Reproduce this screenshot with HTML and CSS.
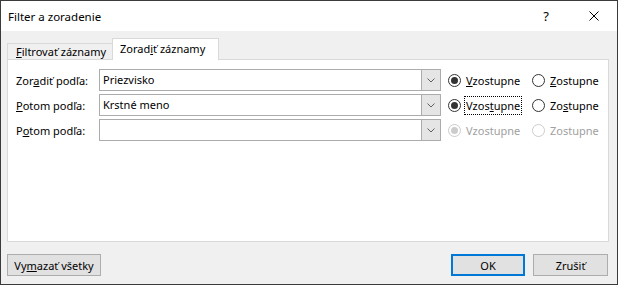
FILE: index.html
```html
<!DOCTYPE html>
<html lang="sk">
<head>
    <meta charset="UTF-8">
    <title>Filter a zoradenie</title>
    <link rel="stylesheet" href="styles.css">
</head>
<body>
    <div class="window">
        <div class="titlebar">
            <div class="title">Filter a zoradenie</div>
            <div class="caption-btn help">?</div>
            <div class="caption-btn close">
                <svg width="10" height="10" viewBox="0 0 10 10"><path d="M0.5 0.5 L9.5 9.5 M9.5 0.5 L0.5 9.5" stroke="#000" stroke-width="1" fill="none"/></svg>
            </div>
        </div>

        <div class="dialog-body">
            <div class="tabs">
                <div class="tab"><u>F</u>iltrovať záznamy</div>
                <div class="tab active">Zorad<u>i</u>ť záznamy</div>
            </div>

            <div class="panel">
                <div class="row">
                    <div class="field-label">Zor<u>a</u>diť podľa:</div>
                    <div class="combo">
                        <span class="combo-text">Priezvisko</span>
                        <span class="combo-btn"><svg width="8" height="5" viewBox="0 0 8 5"><path d="M0.5 0.5 L4 4 L7.5 0.5" stroke="#606060" fill="none"/></svg></span>
                    </div>
                    <div class="radios">
                        <div class="radio checked"><span class="circle"></span><span class="radio-text"><u>V</u>zostupne</span></div>
                        <div class="radio"><span class="circle"></span><span class="radio-text"><u>Z</u>ostupne</span></div>
                    </div>
                </div>
                <div class="row">
                    <div class="field-label"><u>P</u>otom podľa:</div>
                    <div class="combo">
                        <span class="combo-text">Krstné meno</span>
                        <span class="combo-btn"><svg width="8" height="5" viewBox="0 0 8 5"><path d="M0.5 0.5 L4 4 L7.5 0.5" stroke="#606060" fill="none"/></svg></span>
                    </div>
                    <div class="radios">
                        <div class="radio checked"><span class="circle"></span><span class="radio-text focused">Vzos<u>t</u>upne</span></div>
                        <div class="radio"><span class="circle"></span><span class="radio-text">Zo<u>s</u>tupne</span></div>
                    </div>
                </div>
                <div class="row">
                    <div class="field-label">P<u>o</u>tom podľa:</div>
                    <div class="combo">
                        <span class="combo-text"></span>
                        <span class="combo-btn"><svg width="8" height="5" viewBox="0 0 8 5"><path d="M0.5 0.5 L4 4 L7.5 0.5" stroke="#606060" fill="none"/></svg></span>
                    </div>
                    <div class="radios disabled">
                        <div class="radio checked"><span class="circle"></span><span class="radio-text">Vzostupne</span></div>
                        <div class="radio"><span class="circle"></span><span class="radio-text">Zostupne</span></div>
                    </div>
                </div>
            </div>

            <div class="footer">
                <button class="btn clear">Vy<u>m</u>azať všetky</button>
                <div class="spacer"></div>
                <button class="btn ok">OK</button>
                <button class="btn cancel">Zrušiť</button>
            </div>
        </div>
    </div>
</body>
</html>
```

FILE: styles.css
```css
body {
    margin: 0;
    padding: 0;
    font-family: "Noto Sans", "Liberation Sans", sans-serif;
    font-size: 11px;
    color: #000;
    background-color: #fff;
}

u {
    text-underline-offset: 1px;
}

.window {
    width: 618px;
    height: 285px;
    box-sizing: border-box;
    border: 1px solid #3b3b3b;
    background-color: #f0f0f0;
    display: flex;
    flex-direction: column;
}

.titlebar {
    height: 30px;
    background-color: #fff;
    display: flex;
    align-items: center;
}
.title {
    flex: 1;
    padding-left: 7px;
    font-size: 11.5px;
}
.caption-btn {
    width: 46px;
    height: 30px;
    display: flex;
    justify-content: center;
    align-items: center;
}
.help {
    font-size: 13px;
    padding-right: 4px;
    box-sizing: border-box;
}
.close svg {
    display: block;
}

.dialog-body {
    flex: 1;
    padding: 7px 8px 0 6px;
    display: flex;
    flex-direction: column;
}

.tabs {
    display: flex;
    align-items: flex-end;
    height: 22px;
    margin-bottom: -1px;
}
.tab {
    height: 17px;
    box-sizing: border-box;
    width: 106px;
    padding-left: 8px;
    border: 1px solid #d9d9d9;
    border-bottom: none;
    background-color: #f0f0f0;
    line-height: 16px;
    white-space: nowrap;
}
.tab.active {
    position: relative;
    z-index: 1;
    height: 22px;
    width: 107px;
    margin-left: -1px;
    padding-left: 7px;
    background-color: #fff;
    line-height: 19px;
}

.panel {
    height: 183px;
    box-sizing: border-box;
    border: 1px solid #d9d9d9;
    background-color: #fff;
    padding: 9px 0 0 8px;
}

.row {
    display: flex;
    align-items: center;
    height: 22px;
    margin-bottom: 3px;
}
.field-label {
    flex: none;
    width: 83px;
    white-space: nowrap;
}

.combo {
    flex: none;
    width: 342px;
    height: 22px;
    box-sizing: border-box;
    border: 1px solid #acacac;
    display: flex;
    background-color: #fff;
}
.combo-text {
    flex: 1;
    padding-left: 3px;
    line-height: 20px;
}
.combo-btn {
    width: 18px;
    border-left: 1px solid #acacac;
    background-color: #e5e5e5;
    display: flex;
    justify-content: center;
    align-items: center;
}

.radios {
    flex: none;
    display: flex;
    margin-left: 7px;
}
.radio {
    display: flex;
    align-items: center;
    width: 84px;
}
.radio + .radio {
    width: auto;
}
.circle {
    flex: none;
    width: 13px;
    height: 13px;
    box-sizing: border-box;
    border: 1px solid #333;
    border-radius: 50%;
    display: flex;
    justify-content: center;
    align-items: center;
}
.radio.checked .circle::after {
    content: "";
    width: 7px;
    height: 7px;
    border-radius: 50%;
    background-color: #333;
}
.radio-text {
    margin-left: 5px;
    line-height: 15px;
    white-space: nowrap;
}
.radio-text.focused {
    outline: 1px dotted #000;
    outline-offset: 1px;
}

.radios.disabled .radio-text {
    color: #a0a0a0;
}
.radios.disabled .circle {
    border-color: #cccccc;
}
.radios.disabled .radio.checked .circle::after {
    background-color: #cccccc;
}

.footer {
    display: flex;
    margin-top: 12px;
    padding-right: 1px;
}
.spacer {
    flex: 1;
}
.btn {
    height: 22px;
    box-sizing: border-box;
    border: 1px solid #adadad;
    background-color: #e1e1e1;
    font-family: "Noto Sans", "Liberation Sans", sans-serif;
    font-size: 11px;
    color: #000;
    padding: 0;
    margin: 0;
}
.btn.clear {
    width: 94px;
}
.btn.ok {
    width: 74px;
    margin-right: 8px;
    border: 2px solid #0078d7;
}
.btn.cancel {
    width: 75px;
}
```
